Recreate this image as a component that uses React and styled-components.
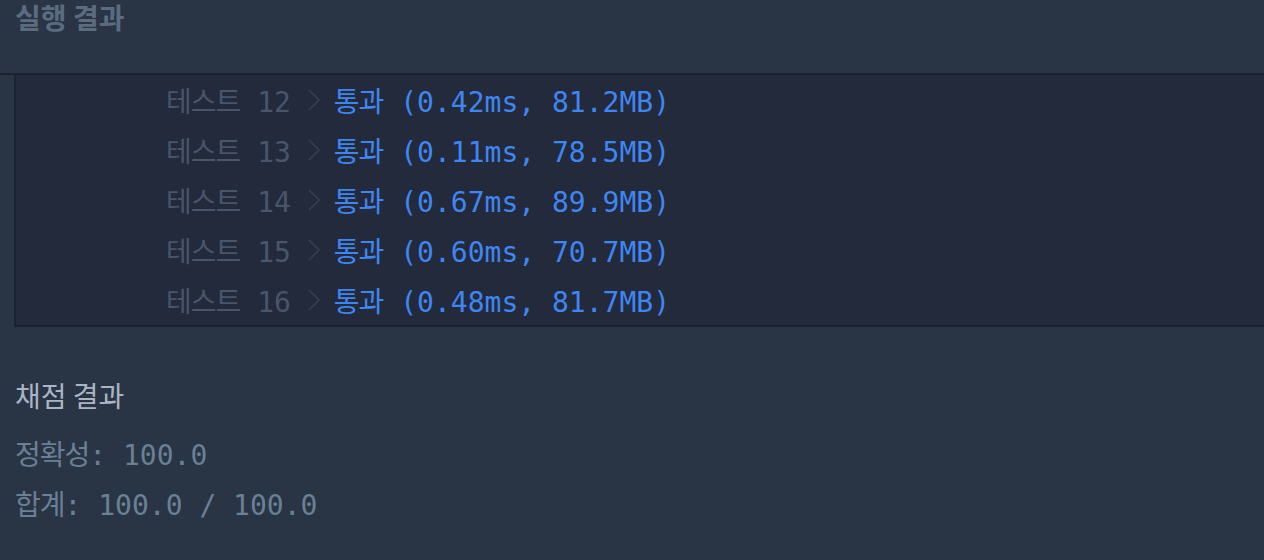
import styled, { createGlobalStyle } from 'styled-components';

const GlobalStyle = createGlobalStyle`
	html, body {
		margin: 0;
		padding: 0;
		background: #293445;
	}
	body {
		font-family: "Noto Sans CJK KR", "Noto Sans", sans-serif;
		overflow: hidden;
	}
`;

const MONO = `"DejaVu Sans Mono", "Noto Sans CJK KR", monospace`;

const Page = styled.div`
	width: 1264px;
	height: 560px;
	background: #293445;
	overflow: hidden;
`;

const Header = styled.div`
	box-sizing: border-box;
	height: 75px;
	padding-left: 15px;
	border-bottom: 2px solid #1d2231;
`;

const HeaderTitle = styled.h2`
	margin: 0;
	font-size: 28px;
	font-weight: 700;
	line-height: 34px;
	color: #5b6c81;
`;

const Console = styled.div`
	margin-left: 14px;
	background: #222a3b;
	border-left: 2px solid #1d2231;
	border-bottom: 2px solid #1d2231;
`;

const Row = styled.div`
	display: flex;
	align-items: center;
	height: 50px;
	padding-left: 150px;
	font-family: ${MONO};
	font-size: 28px;
	white-space: pre;
`;

const Ko = styled.span`
	font-family: "Noto Sans CJK KR", sans-serif;
	letter-spacing: -1px;
`;

const Label = styled.span`
	color: #48556a;
`;

const Chevron = styled.svg`
	margin: 0 14px 0 17px;
	flex: none;
`;

const Result = styled.span`
	color: ${({ $passed }) => ($passed ? '#3f86f2' : '#e5534b')};
`;

const Summary = styled.section`
	padding: 48px 0 0 15px;
`;

const SummaryTitle = styled.h3`
	margin: 0 0 13px;
	font-size: 28px;
	font-weight: 400;
	line-height: 40px;
	color: #a9b5c4;
`;

const Score = styled.div`
	height: 50px;
	font-family: ${MONO};
	font-size: 28px;
	line-height: 50px;
	color: #6a8095;
	white-space: pre;
`;

const tests = [
	{ no: 12, time: '0.42ms', mem: '81.2MB' },
	{ no: 13, time: '0.11ms', mem: '78.5MB' },
	{ no: 14, time: '0.67ms', mem: '89.9MB' },
	{ no: 15, time: '0.60ms', mem: '70.7MB' },
	{ no: 16, time: '0.48ms', mem: '81.7MB' },
];

const App = () => {
	return (
		<Page>
			<GlobalStyle />
			<Header>
				<HeaderTitle>실행 결과</HeaderTitle>
			</Header>
			<Console>
				{tests.map(t => (
					<Row key={t.no}>
						<Label>
							<Ko>테스트</Ko> {t.no}
						</Label>
						<Chevron width="12" height="22" viewBox="0 0 12 22">
							<polyline points="1,1 11,11 1,21" fill="none" stroke="#353f50" strokeWidth="1.6" />
						</Chevron>
						<Result $passed>
							<Ko>통과</Ko> ({t.time}, {t.mem})
						</Result>
					</Row>
				))}
			</Console>
			<Summary>
				<SummaryTitle>채점 결과</SummaryTitle>
				<Score>
					<Ko>정확성</Ko>: 100.0
				</Score>
				<Score>
					<Ko>합계</Ko>: 100.0 / 100.0
				</Score>
			</Summary>
		</Page>
	);
};

export default App;
